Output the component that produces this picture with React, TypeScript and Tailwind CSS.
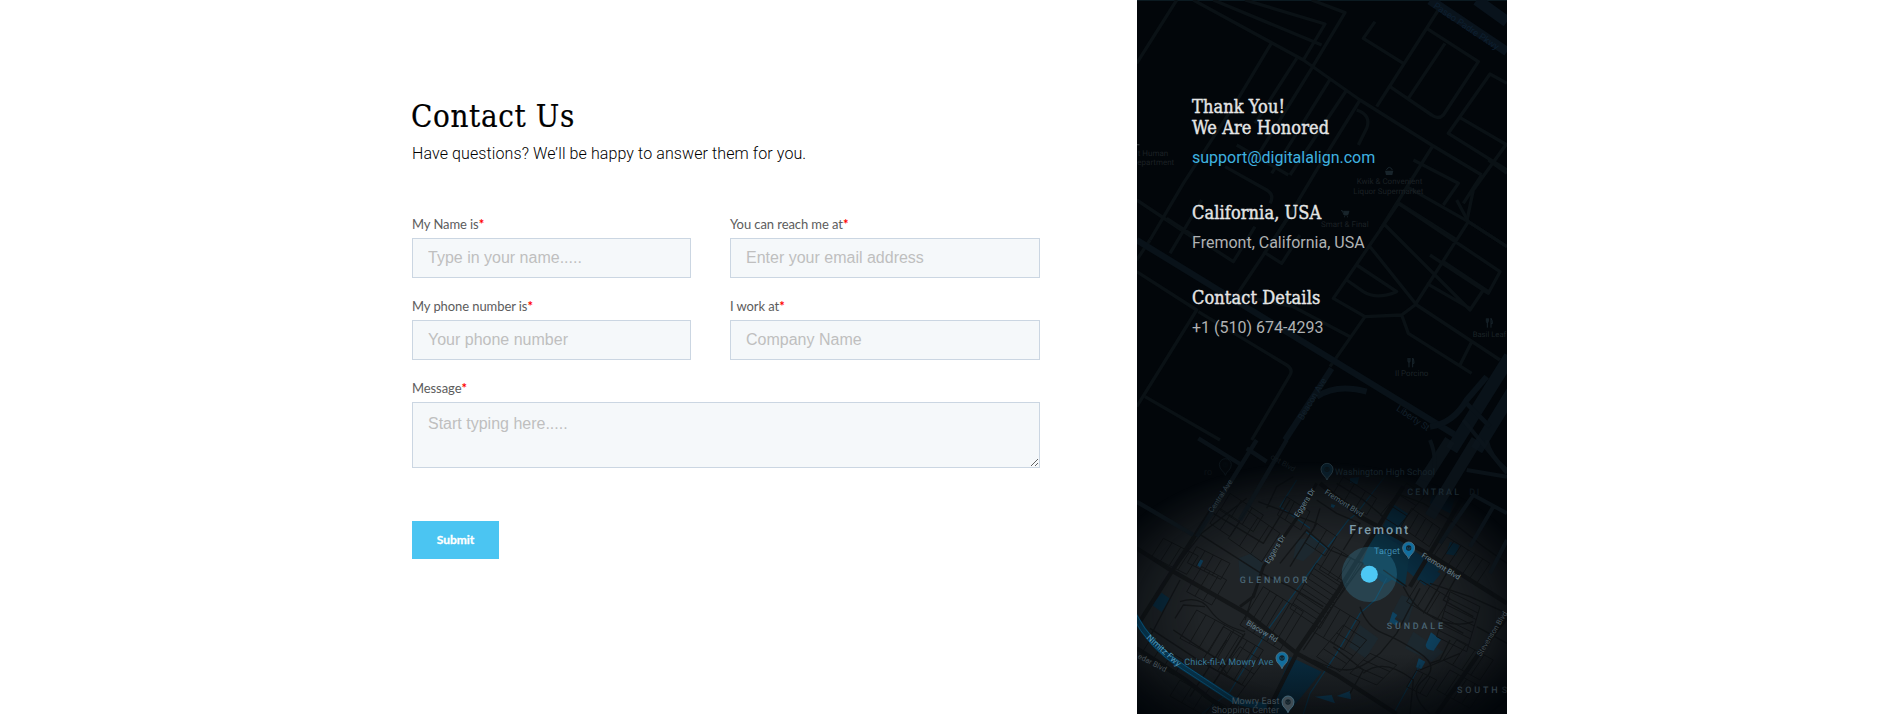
import React from "react";

type Hatch = [number, number, number, number, number, number, number];

/* Each row: start x/y, end x/y, street vector x/y, number of streets. */
const hatches: Hatch[] = [
  [100, 295, 205, 348, -35, 55, 5],
  [200, 320, 300, 370, -28, 48, 5],
  [215, 380, 290, 420, -45, 75, 4],
  [350, 210, 450, 280, -55, 85, 4],
  [270, 205, 330, 245, -30, 45, 3],
  [560, 370, 480, 505, 90, 60, 10],
  [400, 440, 520, 515, -70, 115, 7],
  [600, 490, 690, 545, -50, 85, 4],
  [340, 585, 200, 510, -50, 85, 6],
  [400, 630, 280, 560, -65, 105, 6],
  [330, 620, 220, 770, 70, 45, 5],
  [470, 170, 540, 215, -28, 55, 4],
  [560, 250, 620, 290, -35, 58, 3],
  [610, 320, 690, 370, -42, 68, 4],
  [750, 225, 830, 130, 55, 35, 4],
  [845, 205, 930, 265, -32, 55, 5],
  [950, 290, 1080, 370, -40, 60, 7],
  [870, 420, 960, 475, -40, 65, 4],
  [960, 455, 920, 590, 90, 45, 8],
  [720, 640, 660, 700, 80, 35, 4],
  [860, 690, 920, 720, -30, 50, 4],
  [960, 690, 1060, 745, -40, 60, 5],
  [980, 600, 1090, 660, -40, 60, 5],
  [640, 555, 560, 650, 70, 45, 5],
  [60, 600, 160, 660, -28, 45, 4],
  [150, 720, 290, 800, -30, 48, 5],
  [300, 160, 400, 225, -30, 50, 4],
  [640, 110, 740, 175, -30, 50, 4],
];

const hatchPath = hatches
  .map(([x0, y0, x1, y1, dx, dy, n]) => {
    let d = `M${x0} ${y0}L${x1} ${y1}M${x0 + dx} ${y0 + dy}L${x1 + dx} ${y1 + dy}`;
    for (let i = 0; i < n; i++) {
      const t = n > 1 ? i / (n - 1) : 0;
      d += `M${x0 + (x1 - x0) * t} ${y0 + (y1 - y0) * t}l${dx} ${dy}`;
    }
    return d;
  })
  .join("");

function Pin({ x, y, fill, opacity = 1 }: { x: number; y: number; fill: string; opacity?: number }) {
  return (
    <g transform={`translate(${x} ${y})`} opacity={opacity}>
      <path d="M0 28C-3 16-18 12-18-4a18 18 0 0 1 36 0C18 12 3 16 0 28Z" fill={fill} stroke="#4a6f82" strokeWidth="3" />
      <circle cy="-4" r="8" fill="#12222b" />
      <path d="M-4-7v5M4-7v5M-4-1h8" stroke={fill} strokeWidth="1.5" />
    </g>
  );
}

function Cutlery({ x, y }: { x: number; y: number }) {
  return (
    <path
      transform={`translate(${x} ${y})`}
      d="M-8-14v9q0 4 3 4t3-4v-9M-5-14v28M6 14v-28q4 4 4 16H6"
      fill="none"
      stroke="#18242b"
      strokeWidth="3"
    />
  );
}

function MapArt() {
  return (
    <svg className="absolute inset-0 h-full w-full" viewBox="0 0 370 714" fontFamily="Roboto, sans-serif" textRendering="geometricPrecision" aria-hidden="true">
      <defs>
        <radialGradient id="fade" gradientUnits="userSpaceOnUse" cx="0" cy="0" r="1" gradientTransform="translate(555 525) scale(690 460)">
          <stop offset="0.5" stopColor="#fff" />
          <stop offset="0.75" stopColor="#999" />
          <stop offset="0.9" stopColor="#3a3a3a" />
          <stop offset="1.08" stopColor="#000" />
        </radialGradient>
        <linearGradient id="floor" x1="0" x2="0" y1="0" y2="1">
          <stop offset="0" stopColor="#02060a" stopOpacity="0" />
          <stop offset="1" stopColor="#02060a" stopOpacity="0.6" />
        </linearGradient>
        <mask id="cityMask" maskUnits="userSpaceOnUse" x="0" y="0" width="1200" height="830">
          <rect width="1200" height="830" fill="url(#fade)" />
        </mask>
      </defs>
      <rect width="370" height="714" fill="#02060a" />
      <rect width="370" height="1" fill="#0b1a21" />

      {/* northern district */}
      <g transform="translate(-7 0) scale(.33333)" fill="none" stroke="#0a1115" strokeWidth="10" strokeLinejoin="round">
        <path d="M140 0L20 190M190 0L425 128L520 180L690 300L905 435L1055 525M345 0L585 72L520 180M250 0L575 135M545 0L645 38L545 205L425 400M425 128L310 320L160 550L60 720M500 175L375 370M545 205L375 480M600 238L425 520M650 270L480 525M690 300L560 510L500 610L430 720M680 330Q725 345 710 385L685 435M735 65L700 115L820 190M925 30L740 320M890 85L1045 185L940 345Q925 360 905 345L780 260M945 130L835 295M1131 250L1080 222L955 400L1131 510M985 350L1131 435M1131 430L1030 570L1010 665M910 435L750 690M850 480L985 550L940 615M1055 525L1000 610M800 605L980 720M320 435L475 525M285 500L410 570Q435 585 420 610M20 600L200 720M1131 520L1075 480M1015 665L1131 740M830 560L1015 665" />
        <path d="M900 0L1131 155" stroke="#09131c" strokeWidth="28" />
        <path d="M1040 0L1131 65" stroke="#09131c" strokeWidth="34" />
        <g stroke="none" fill="#1b2024" fontSize="24">
          <text x="23" y="467">t Human</text>
          <text x="22" y="496">epartment</text>
          <text x="680" y="553">Kwik &amp; Convenient</text>
          <text x="670" y="583">Liquor Supermarket</text>
          <text x="573" y="682">Smart &amp; Final</text>
          <text transform="translate(908 22) rotate(34)" fill="#0d1f30" fontSize="28">Paseo Padre Pkwy</text>
          <path d="M765 512h25l-3 13h-19Z" fill="#18242b" />
          <path d="M769 510q9-16 18 0M633 632h4l5 13h11l4-11h-17" fill="none" stroke="#18242b" strokeWidth="3" />
          <path d="M640 634h17l-4 11h-11ZM642 649h3v3h-3ZM651 649h3v3h-3Z" fill="#18242b" />
          <path d="M20 432h8v4h-8z" fill="#30363a" />
        </g>
      </g>

      {/* central district */}
      <g transform="translate(-7 200) scale(.33333)" fill="none" stroke="#0a1115" strokeWidth="10" strokeLinejoin="round">
        <path d="M20 215L200 330L20 620M205 335L470 495Q490 508 480 525L365 720M45 590L270 720M60 120L20 180M215 0L120 160M110 55L310 185L375 80M510 0L320 285L490 320L660 410M400 155L455 190L510 105M805 10L610 295L705 350L600 500M765 75L1020 330L1060 270M720 140L860 315M680 195L800 275Q740 300 700 275L650 240M805 10L1110 215L1075 280L900 165M980 0L1015 65L855 315L815 345L705 350M815 345L835 400L1025 520M860 315L1110 480M1025 425L990 495M890 250L1020 325M940 185L1075 275M1015 65L1131 140" />
        <g stroke="#091219">
          <path d="M20 120L1000 720" strokeWidth="19" />
          <path d="M605 505L465 720M560 590Q620 550 710 575M900 680Q970 670 1010 600L1070 530" strokeWidth="18" />
          <path d="M1140 470L965 750M1150 570L1040 750" strokeWidth="38" />
          <path d="M1010 610L1080 680" strokeWidth="14" />
        </g>
        <g stroke="none" fill="#1b2327" fontSize="24">
          <text x="1028" y="410" fontSize="23">Basil Leaf</text>
          <text x="795" y="528">Il Porcino</text>
          <text transform="translate(518 662) rotate(-59)" fill="#12202b" fontSize="27">Beacon Ave</text>
          <text transform="translate(797 630) rotate(34)" fill="#12202b" fontSize="27">Liberty St</text>
        </g>
        <Cutlery x={1077} y={369} />
        <Cutlery x={842} y={488} />
      </g>

      {/* southern district */}
      <g transform="translate(-7 440) scale(.33333)">
        <g mask="url(#cityMask)">
          <rect width="1200" height="830" fill="#202427" />
          <path d="M325 355l40-15 38 35-25 45h-48zM500 300l50-10 25 22-55 52-30-10zM690 555l55 40-38 60-50-35zM815 465l40 15-22 70-50-25zM850 575l90 60-35 30-80-40z" fill="#1c282f" />
          <path d="M790 192l45 30-40 70-40-25zM740 270l60 25 130 92-45 50-55-45-65 40-60-42zM890 372l42 30-30 35-30-25zM905 165l70 10-15 45-60-30zM95 458l27 20-27 38-30-22zM480 650l95 45-105 130h-45l10-60zM960 305l28 10-10 32-30-5z" fill="#092c40" />
          <path d="M735 270l105 65-15 105-130-70z" fill="#0a3042" />
          <path d="M903 577l30 22-22 33q-24-2-24-17zM866 655l20 10-12 22-16-5zM788 515l14 10-8 12 12 8-8 12-20-12zM210 358l10 4-10 20-8-6zM555 770l50-5 10 25zM620 768l40-15 3 25zM604 192l12 4-5 8-8-4zM660 115l28-4-6 22-22-5zM680 72l45-1-25 10z" fill="#0e4260" />
          <g fill="none" stroke="#0b3850" strokeWidth="3.5">
            <path d="M500 120L450 200L540 265M527 275L590 325L655 240L680 220L780 90M590 325L420 560L300 755L215 822M770 415L735 480L690 520L620 640L540 760L520 822M870 675L790 822" />
          </g>
          <g fill="none" stroke="#131618" strokeLinejoin="round">
            <path d={hatchPath} strokeWidth="3" />
            <path
              strokeWidth="4"
              d="M125 395L215 280L350 175M205 280L385 395L480 440L580 500M250 220L400 310L480 180M385 185L560 250L480 380M410 205L440 140L490 110M450 370L530 270L600 330L700 370M150 420L110 495L55 600M150 485Q210 465 240 510T345 575M135 535L160 495L225 500M130 570L250 650L290 700M290 600L180 770M345 580L245 740M370 460L345 540M520 630L620 480L700 370M690 500Q710 560 760 580T870 640T880 720T900 822M550 660Q610 690 650 690T750 640L800 580L870 445M610 620L700 690L660 760M700 700Q760 650 850 720L840 822M820 440Q850 500 890 520T1000 580M1131 520L1020 470L900 430M950 400L880 520M980 410L940 480L1030 530M890 520L940 545Q990 560 1030 545M960 600L930 660L900 670M1040 560L1131 610M870 690L990 640M760 390L830 440M60 565L220 670L330 730M560 180L620 220L690 250L640 330M570 205L550 270M620 130L700 180L760 230M800 160L880 190L960 240L1060 320L1131 370"
            />
            <path strokeWidth="13" d="M20 325L125 392L350 520L500 640L620 705L800 822M380 0L125 395L20 560M500 635L620 460L820 140M500 640L430 780L410 822M840 440L930 290L1010 150M1131 530L1040 650L920 822M570 130L690 230L910 350L1131 490M20 625L160 715L300 822" />
            <path strokeWidth="9" d="M560 130L500 235L400 380L370 470L330 500" />
          </g>
          <path d="M10 520Q60 620 160 682L310 780Q350 795 410 798" fill="none" stroke="#0a4a6c" strokeWidth="19" />
          <path d="M4 523Q54 626 158 688L308 786M16 518Q66 614 164 676L312 774" fill="none" stroke="#0c79b0" strokeWidth="3" />
          <rect y="640" width="1200" height="190" fill="url(#floor)" />
        </g>

        <g fill="none" stroke="#0c151c" opacity=".8">
          <path d="M960 0L870 140M1040 0L900 230" strokeWidth="34" />
          <path d="M1000 -60L1131 100M1131 110L1010 90M900 0Q925 60 905 110M1070 0Q1080 50 1131 90" strokeWidth="12" />
          <path d="M1131 220L1030 165L930 310M1090 200L1020 320M1131 300L1080 400" strokeWidth="12" />
          <path d="M20 185L190 285M205 -5L335 75M380 0L200 290M470 0L330 240M350 25L410 65" strokeWidth="13" />
        </g>

        <g fontSize="22.5" fill="#68828f">
          <text transform="translate(247 220) rotate(-57)" fill="#2f3c43">Central Ave</text>
          <text transform="translate(505 233) rotate(-58)">Eggers Dr</text>
          <text transform="translate(416 373) rotate(-58)">Eggers Dr</text>
          <text transform="translate(583 160) rotate(33)" fill="#506672">Fremont Blvd</text>
          <text transform="translate(873 350) rotate(32)">Fremont Blvd</text>
          <text transform="translate(347 553) rotate(31)">Blacow Rd</text>
          <text transform="translate(420 55) rotate(30)" fill="#11191e">ont Blvd</text>
          <text transform="translate(1052 650) rotate(-58)" fill="#414d54">Stevenson Blvd</text>
          <text transform="translate(22 654) rotate(27)" fill="#465158">edar Blvd</text>
          <text transform="translate(48 595) rotate(42)" fontSize="26" fill="#5698b9">Nimitz Fwy</text>
        </g>
        <g fontSize="27" fill="#3a7c9c">
          <text x="163" y="674" textLength="267">Chick-fil-A Mowry Ave</text>
          <text x="732" y="342" textLength="78" fill="#3f89ac">Target</text>
          <text x="615" y="105" textLength="300" fill="#15222a">Washington High School</text>
          <text x="305" y="791" textLength="143" fill="#425059">Mowry East</text>
          <text x="245" y="818" textLength="202" fill="#354048">Shopping Center</text>
          <text x="222" y="104" fill="#0b1115">ro</text>
        </g>
        <g fontWeight="500" fill="#4b6675">
          <text x="329" y="430" fontSize="27" textLength="203">GLENMOOR</text>
          <text x="770" y="568" fontSize="27" textLength="169">SUNDALE</text>
          <text x="832" y="165" fontSize="27" textLength="155" fill="#1b2932">CENTRAL</text>
          <text x="1018" y="165" fontSize="27" letterSpacing="5" fill="#0c151b">DI</text>
          <text x="981" y="760" fontSize="27" textLength="122" fill="#303e47">SOUTH</text>
          <text x="1115" y="760" fontSize="27" fill="#1a2227">S</text>
          <text x="658" y="282" fontSize="38" textLength="177" fontWeight="500" fill="#7c9aa8">Fremont</text>
        </g>
        <Pin x={836} y={328} fill="#126e9e" />
        <Pin x={456} y={658} fill="#126e9e" />
        <Pin x={474} y={790} fill="#46525a" opacity={0.9} />
        <Pin x={591} y={92} fill="#10394f" opacity={0.4} />
        <Pin x={286} y={78} fill="#0b1419" opacity={0.12} />
        <circle cx="718" cy="403" r="83" fill="#4bc5f2" fillOpacity=".2" />
        <circle cx="718" cy="403" r="25.5" fill="#4dc8f4" />
      </g>
    </svg>
  );
}

const slab = "font-['Roboto_Slab','DejaVu_Serif_Condensed','DejaVu_Serif',serif]";
const sideHeading = "text-[18px] leading-[21px] tracking-[0.1px] text-[#e4e5e5] [-webkit-text-stroke:0.4px_#e4e5e5]";
const fieldClass =
  "block w-full rounded-none border border-[#cbd6e2] bg-[#f5f8fa] px-[15px] font-['Liberation_Sans',Arial,sans-serif] text-base text-[#33475b] placeholder:text-[#bfbfbf] placeholder:opacity-100 outline-none";

function Label({ id, children }: { id: string; children: string }) {
  return (
    <label htmlFor={id} className="mb-1 block h-5 font-[Lato,sans-serif] text-[13px] leading-5 tracking-[-0.08px] text-[#5c5c5c]">
      {children}
      <span className="font-bold text-[#ff0000]">*</span>
    </label>
  );
}

function Field({ id, label, placeholder }: { id: string; label: string; placeholder: string }) {
  return (
    <div>
      <Label id={id}>{label}</Label>
      <input id={id} placeholder={placeholder} className={`${fieldClass} h-10`} />
    </div>
  );
}

export default function App() {
  return (
    <div className="flex h-[714px] w-full overflow-hidden bg-white pl-[412px] font-[Roboto,sans-serif]">
      <main className="mr-[97px] w-[628px] shrink-0 pt-[94px]">
        <h1 className={`${slab} -ml-px h-[44px] whitespace-nowrap text-[31px] leading-[44px] tracking-[0.65px] text-black [-webkit-text-stroke:0.2px_black]`}>
          Contact Us
        </h1>
        <p className="mt-1 h-6 whitespace-nowrap text-base font-light leading-6 tracking-[0.1px] text-black">
          Have questions? We’ll be happy to answer them for you.
        </p>
        <form className="mt-12" onSubmit={(e) => e.preventDefault()}>
          <div className="grid grid-cols-[279px_310px] gap-x-[39px] gap-y-[18px]">
            <Field id="name" label="My Name is" placeholder="Type in your name....." />
            <Field id="email" label="You can reach me at" placeholder="Enter your email address" />
            <Field id="phone" label="My phone number is" placeholder="Your phone number" />
            <Field id="company" label="I work at" placeholder="Company Name" />
            <div className="col-span-2">
              <Label id="message">Message</Label>
              <textarea id="message" placeholder="Start typing here....." className={`${fieldClass} h-[66px] resize py-[9px]`} />
            </div>
          </div>
          <button className="mt-[53px] block h-[38px] w-[87px] bg-[#4bc5f2] font-[Lato,sans-serif] text-xs font-bold text-white [-webkit-text-stroke:0.3px_white]">
            Submit
          </button>
        </form>
      </main>
      <aside className="relative w-[370px] shrink-0">
        <MapArt />
        <div className="relative flex flex-col whitespace-nowrap pl-[55px] pt-[96px] text-base leading-6 text-[#b0b2b3]">
          <h2 className={`${slab} ${sideHeading}`}>
            Thank You!
            <br />
            We Are Honored
          </h2>
          <a className="mt-2 text-[#3fb2e0]">support@digitalalign.com</a>
          <h2 className={`${slab} ${sideHeading} mt-8`}>California, USA</h2>
          <p className="mt-2">Fremont, California, USA</p>
          <h2 className={`${slab} ${sideHeading} mt-8`}>Contact Details</h2>
          <p className="mt-2">+1 (510) 674-4293</p>
        </div>
      </aside>
    </div>
  );
}
